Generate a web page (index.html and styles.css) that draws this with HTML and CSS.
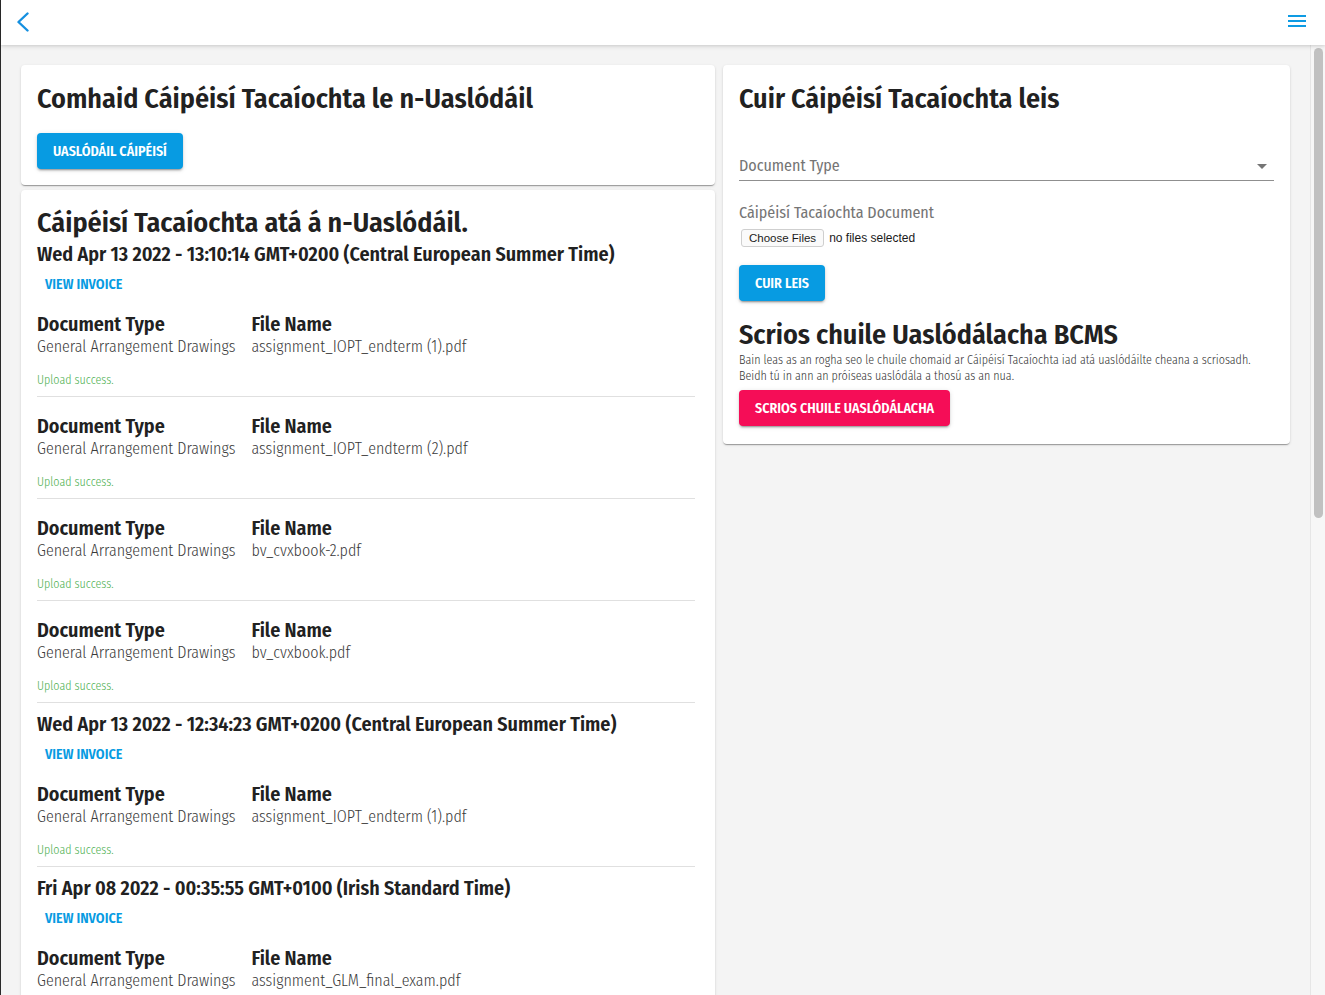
FILE: index.html
```html
<!DOCTYPE html>
<html lang="ga">
<head>
<meta charset="utf-8">
<title>Cáipéisí Tacaíochta</title>
<link rel="stylesheet" href="styles.css">
</head>
<body>
<div class="app">
  <header class="topbar">
    <button class="icon-btn" aria-label="Back">
      <svg class="back-icon" width="14" height="20" viewBox="0 0 14 20"><polyline points="11.5,1.5 2.5,10 11.5,18.5" fill="none" stroke="currentColor" stroke-width="2.4" stroke-linecap="round" stroke-linejoin="round"/></svg>
    </button>
    <button class="icon-btn" aria-label="Menu">
      <svg class="menu-icon" width="18" height="12" viewBox="0 0 18 12"><rect x="0" y="0" width="18" height="2"/><rect x="0" y="5" width="18" height="2"/><rect x="0" y="10" width="18" height="2"/></svg>
    </button>
  </header>
  <div class="viewport">
    <main class="content">
      <div class="col">
        <section class="card">
          <h1 class="card-title">Comhaid Cáipéisí Tacaíochta le n-Uaslódáil</h1>
          <div class="actions"><button class="btn btn-primary">Uaslódáil Cáipéisí</button></div>
        </section>
        <section class="card list-card">
          <h1 class="card-title">Cáipéisí Tacaíochta atá á n-Uaslódáil.</h1>

          <div class="group">
            <h3 class="group-date">Wed Apr 13 2022 - 13:10:14 GMT+0200 (Central European Summer Time)</h3>
            <button class="text-btn">View Invoice</button>
            <div class="entry">
              <div class="entry-grid">
                <div><div class="label">Document Type</div><div class="value">General Arrangement Drawings</div></div>
                <div><div class="label">File Name</div><div class="value">assignment_IOPT_endterm (1).pdf</div></div>
              </div>
              <div class="status">Upload success.</div>
            </div>
            <div class="entry">
              <div class="entry-grid">
                <div><div class="label">Document Type</div><div class="value">General Arrangement Drawings</div></div>
                <div><div class="label">File Name</div><div class="value">assignment_IOPT_endterm (2).pdf</div></div>
              </div>
              <div class="status">Upload success.</div>
            </div>
            <div class="entry">
              <div class="entry-grid">
                <div><div class="label">Document Type</div><div class="value">General Arrangement Drawings</div></div>
                <div><div class="label">File Name</div><div class="value">bv_cvxbook-2.pdf</div></div>
              </div>
              <div class="status">Upload success.</div>
            </div>
            <div class="entry">
              <div class="entry-grid">
                <div><div class="label">Document Type</div><div class="value">General Arrangement Drawings</div></div>
                <div><div class="label">File Name</div><div class="value">bv_cvxbook.pdf</div></div>
              </div>
              <div class="status">Upload success.</div>
            </div>
          </div>

          <div class="group">
            <h3 class="group-date">Wed Apr 13 2022 - 12:34:23 GMT+0200 (Central European Summer Time)</h3>
            <button class="text-btn">View Invoice</button>
            <div class="entry">
              <div class="entry-grid">
                <div><div class="label">Document Type</div><div class="value">General Arrangement Drawings</div></div>
                <div><div class="label">File Name</div><div class="value">assignment_IOPT_endterm (1).pdf</div></div>
              </div>
              <div class="status">Upload success.</div>
            </div>
          </div>

          <div class="group">
            <h3 class="group-date">Fri Apr 08 2022 - 00:35:55 GMT+0100 (Irish Standard Time)</h3>
            <button class="text-btn">View Invoice</button>
            <div class="entry">
              <div class="entry-grid">
                <div><div class="label">Document Type</div><div class="value">General Arrangement Drawings</div></div>
                <div><div class="label">File Name</div><div class="value">assignment_GLM_final_exam.pdf</div></div>
              </div>
              <div class="status">Upload success.</div>
            </div>
          </div>
        </section>
      </div>

      <div class="col">
        <section class="card">
          <h1 class="card-title">Cuir Cáipéisí Tacaíochta leis</h1>
          <div class="select-field">
            <span>Document Type</span>
            <span class="caret"></span>
          </div>
          <div class="file-label">Cáipéisí Tacaíochta Document</div>
          <div class="file-row">
            <span class="file-btn">Choose Files</span>
            <span class="file-none">no files selected</span>
          </div>
          <div class="actions-sm"><button class="btn btn-primary">Cuir Leis</button></div>
          <h1 class="card-title danger-title">Scrios chuile Uaslódálacha BCMS</h1>
          <p class="danger-text">Bain leas as an rogha seo le chuile chomaid ar Cáipéisí Tacaíochta iad atá uaslódáilte cheana a scriosadh.<br>Beidh tú in ann an próiseas uaslódála a thosú as an nua.</p>
          <div class="actions-xs"><button class="btn btn-danger">Scrios chuile Uaslódálacha</button></div>
        </section>
      </div>
    </main>
    <div class="scrollbar"><div class="thumb"></div></div>
  </div>
</div>
</body>
</html>
```
FILE: styles.css
```css
* { box-sizing: border-box; }
html, body { margin: 0; height: 100%; overflow: hidden; }
body {
  font-family: "Fira Sans Condensed", "Liberation Sans Narrow", "DejaVu Sans Condensed", "Liberation Sans", sans-serif;
  color: #212121;
  background: #f4f4f4;
}
.app {
  height: 100vh;
  display: flex;
  flex-direction: column;
  border-left: 1px solid #2a2a2a;
}
.topbar {
  position: relative;
  z-index: 2;
  height: 45px;
  flex: none;
  background: #fff;
  display: flex;
  align-items: center;
  justify-content: space-between;
  padding: 0 19px 0 15px;
  box-shadow: 0 2px 4px rgba(0,0,0,0.10), 0 1px 2px rgba(0,0,0,0.06);
}
.icon-btn {
  border: 0;
  background: none;
  padding: 0;
  display: flex;
  color: #1590e0;
  cursor: pointer;
}
.back-icon { margin-top: -2px; }
.menu-icon { fill: #0e9be3; margin-top: -3px; }

.viewport {
  flex: 1;
  display: flex;
  overflow: hidden;
  background: #f4f4f4;
}
.content {
  flex: 1;
  padding: 20px;
  display: grid;
  grid-template-columns: 694px 567px;
  column-gap: 8px;
  align-items: start;
  overflow: hidden;
}
.col {
  display: flex;
  flex-direction: column;
  gap: 5px;
}
.card {
  background: #fff;
  border-radius: 4px;
  padding: 18px 16px 16px;
  box-shadow: 0 2px 1px -1px rgba(0,0,0,0.2), 0 1px 1px 0 rgba(0,0,0,0.14), 0 1px 3px 0 rgba(0,0,0,0.12);
}
.card-title {
  margin: 0;
  font-size: 28px;
  line-height: 32px;
  font-weight: 600;
  color: #212121;
}
.actions { margin-top: 18px; }
.btn {
  display: inline-flex;
  align-items: center;
  height: 36px;
  padding: 0 16px;
  border: 0;
  border-radius: 4px;
  font-family: inherit;
  font-size: 14px;
  font-weight: 600;
  text-transform: uppercase;
  color: #fff;
  box-shadow: 0 3px 1px -2px rgba(0,0,0,0.2), 0 2px 2px 0 rgba(0,0,0,0.14), 0 1px 5px 0 rgba(0,0,0,0.12);
}
.btn-primary { background: #079be2; }
.btn-danger { background: #f50d57; }

.list-card { padding: 17px 20px 0 16px; }
.group-date {
  margin: 9px 0 0;
  font-size: 20px;
  line-height: 24px;
  font-weight: 600;
}
.group:first-of-type .group-date { margin-top: 3px; }
.text-btn {
  display: inline-block;
  margin-top: 4px;
  padding: 6px 8px 1px;
  border: 0;
  background: none;
  font-family: inherit;
  font-size: 14px;
  line-height: 18px;
  font-weight: 600;
  text-transform: uppercase;
  color: #079be2;
}
.entry {
  padding: 17px 0 8px;
  border-bottom: 1px solid #e0e0e0;
}
.entry-grid {
  display: flex;
  gap: 16px;
}
.label {
  font-size: 20px;
  line-height: 24px;
  font-weight: 600;
}
.value {
  padding-top: 1px;
  font-size: 16px;
  line-height: 20px;
  font-weight: 300;
  color: #3a3a3a;
}
.status {
  margin-top: 15px;
  font-size: 12px;
  line-height: 16px;
  font-weight: 300;
  color: #4caf50;
}

.select-field {
  margin-top: 41px;
  display: flex;
  align-items: center;
  justify-content: space-between;
  padding-bottom: 4px;
  border-bottom: 1px solid #8f8f8f;
  font-size: 16px;
  line-height: 20px;
  color: #757575;
}
.caret {
  width: 0;
  height: 0;
  margin-right: 7px;
  border-left: 5px solid transparent;
  border-right: 5px solid transparent;
  border-top: 5px solid #757575;
}
.file-label {
  margin-top: 22px;
  font-size: 16px;
  line-height: 20px;
  color: #757575;
}
.file-row {
  margin-top: 6px;
  display: flex;
  align-items: center;
  gap: 5px;
  font-family: "Liberation Sans", Arial, sans-serif;
  color: #1a1a1a;
}
.file-btn {
  margin-left: 2px;
  padding: 1px 7px;
  border: 1px solid #cfcfcf;
  border-radius: 3px;
  background: #fafafa;
  font-size: 11.5px;
  line-height: 14px;
}
.file-none { font-size: 12px; }
.actions-sm { margin-top: 18px; }
.danger-title { margin-top: 18px; }
.danger-text {
  margin: 1px 0 0;
  font-size: 12px;
  line-height: 16px;
  font-weight: 300;
  color: #333;
}
.actions-xs { margin-top: 6px; }
.card:has(.danger-title) { padding-bottom: 18px; }

.scrollbar {
  flex: none;
  width: 15px;
  border-left: 1px solid #e6e6e6;
  background: #f7f7f7;
  padding: 3px 2px 0 3px;
}
.thumb {
  width: 9px;
  height: 470px;
  border-radius: 5px;
  background: #c1c1c1;
}
```
